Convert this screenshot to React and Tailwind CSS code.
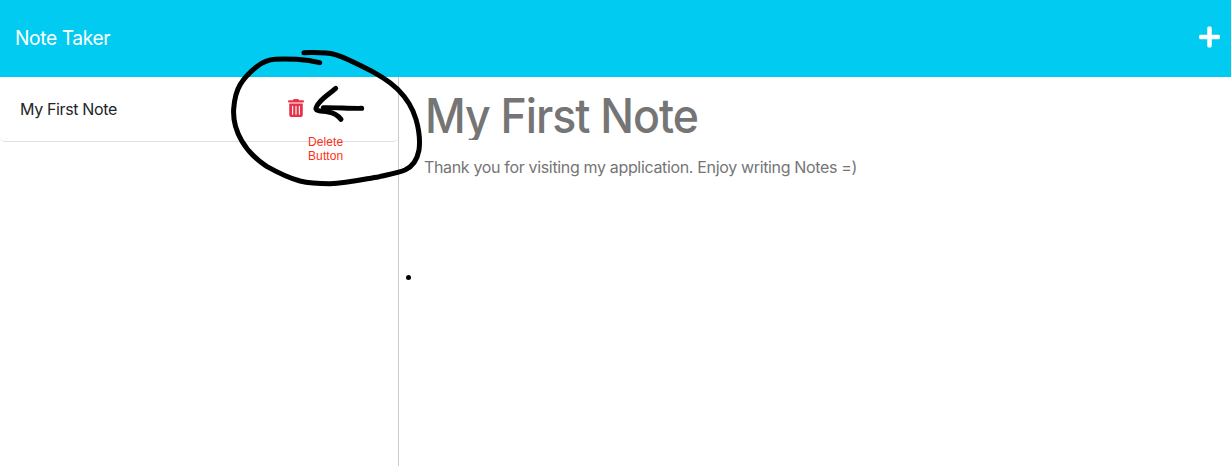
import React from "react";
import { FaPlus, FaTrashAlt } from "react-icons/fa";

function Header() {
  return (
    <header className="flex h-[77px] shrink-0 items-center justify-between bg-[#02cbf1] pl-[15px] pr-[11px] text-white">
      <a className="mb-[2px] origin-left scale-x-[0.96] text-[20px] leading-[30px] tracking-[-0.4px]">Note Taker</a>
      <button aria-label="New note" className="mb-[3px]">
        <FaPlus className="h-6 w-[21px]" />
      </button>
    </header>
  );
}

function NoteList() {
  return (
    <aside className="w-[399px] shrink-0 border-r border-[#cbcbcb]">
      <ul>
        <li className="flex h-[65px] items-center rounded-b-[5px] border-b border-[#dfdfdf] pl-5">
          <span className="w-[268px] text-[16px] leading-6 tracking-[-0.36px] text-[#212529]">My First Note</span>
          <button aria-label="Delete note" className="mb-[2px] text-[#e6334a]">
            <FaTrashAlt className="h-[18px] w-4" />
          </button>
        </li>
      </ul>
    </aside>
  );
}

function Annotation() {
  return (
    <div className="pointer-events-none absolute left-[220px] top-[40px] h-[160px] w-[220px]">
      <svg
        viewBox="0 0 660 480"
        className="h-full w-full"
        fill="none"
        stroke="#000"
        strokeWidth="15"
        strokeLinecap="round"
        strokeLinejoin="round"
      >
        <path d="M252 38C288 38 318 36 343 43C370 50 393 63 420 76C462 96 505 120 533 148C558 173 578 204 588 238C597 269 601 300 597 330C592 358 579 379 555 390C530 400 502 404 478 410C430 418 380 430 330 431C299 431 269 430 240 423C204 413 172 397 140 379C109 359 83 333 65 302C47 271 39 239 41 207C43 179 48 154 61 133C73 113 91 95 110 80C127 67 143 59 165 58C187 56 208 57 230 58C255 60 277 63 299 68" />
        <path d="M347 145C330 160 312 171 301 184C294 192 287 201 288 207C290 214 310 213 325 216C346 219 355 228 363 238" />
        <path d="M310 203C348 202 388 206 425 205" />
      </svg>
      <p className="absolute left-[88px] top-[95px] font-['Liberation_Sans',Arial,sans-serif] text-[12px] leading-[14px] tracking-[0.1px] text-[#ff2f19]">
        Delete
        <br />
        Button
      </p>
    </div>
  );
}

export default function App() {
  return (
    <div className="relative flex h-screen flex-col overflow-hidden bg-white font-[Inter,sans-serif]">
      <Header />
      <div className="flex flex-1">
        <NoteList />
        <main className="relative flex-1 pl-[26px] pt-[15px] text-[#757575]">
          <h1 className="h-12 origin-left scale-x-[0.93] overflow-hidden text-[48px] font-[450] leading-[48px] tracking-[-1.1px]">
            My First Note
          </h1>
          <p className="-ml-px mt-[15px] text-[16px] leading-6 tracking-[-0.34px]">
            Thank you for visiting my application. Enjoy writing Notes =)
          </p>
          <span className="absolute left-[7px] top-[198px] size-[5px] rounded-full bg-black" />
        </main>
      </div>
      <Annotation />
    </div>
  );
}
